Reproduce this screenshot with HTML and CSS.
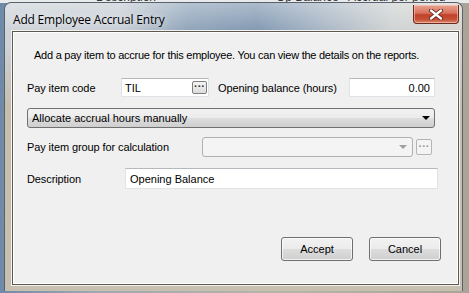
FILE: index.html
```html
<!DOCTYPE html>
<html lang="en">
<head>
    <meta charset="UTF-8">
    <title>Add Employee Accrual Entry</title>
    <link rel="stylesheet" href="styles.css">
</head>
<body>

    <!-- blurred window behind the dialog -->
    <div class="behind">
        <span class="behind-desc">Description</span>
        <span class="behind-open">Op Balance &nbsp; Accrual per period</span>
    </div>

    <div class="window">
        <div class="titlebar">
            <span class="title">Add Employee Accrual Entry</span>
            <button class="close-btn">
                <svg width="14" height="11" viewBox="0 0 14 11">
                    <path d="M2 1.5 L12 9.5 M12 1.5 L2 9.5" stroke="#5a1a10" stroke-width="4" stroke-linecap="round"/>
                    <path d="M2 1.5 L12 9.5 M12 1.5 L2 9.5" stroke="#ffffff" stroke-width="2.4" stroke-linecap="round"/>
                </svg>
            </button>
        </div>

        <div class="client">
            <p class="intro">Add a pay item to accrue for this employee. You can view the details on the reports.</p>

            <div class="row row-code">
                <label class="label label-code">Pay item code</label>
                <div class="textbox code-box">
                    <span>TIL</span>
                    <span class="dots-btn">&middot;&middot;&middot;</span>
                </div>
                <label class="label label-open">Opening balance (hours)</label>
                <div class="textbox hours-box">0.00</div>
            </div>

            <div class="dropdown">
                <span>Allocate accrual hours manually</span>
                <span class="arrow"></span>
            </div>

            <div class="row row-group">
                <label class="label label-group">Pay item group for calculation</label>
                <div class="combo-disabled">
                    <span class="arrow arrow-gray"></span>
                </div>
                <span class="dots-btn dots-disabled">&middot;&middot;&middot;</span>
            </div>

            <div class="row row-desc">
                <label class="label label-desc">Description</label>
                <div class="textbox desc-box">Opening Balance</div>
            </div>

            <div class="buttons">
                <button class="button">Accept</button>
                <button class="button">Cancel</button>
            </div>
        </div>
    </div>

</body>
</html>
```

FILE: styles.css
```css
body {
    margin: 0;
    padding: 0;
    width: 469px;
    height: 293px;
    overflow: hidden;
    font-family: 'Liberation Sans', Arial, sans-serif;
    font-size: 11px;
    color: #000;
    background: linear-gradient(90deg, #6f8aa8 0%, #9fa9b0 20%, #b8b4a8 60%, #a9a497 100%);
}

.behind {
    height: 3px;
    overflow: hidden;
    position: relative;
    font-size: 12px;
    color: #333;
    background: #e8eaec;
}

.behind span {
    position: absolute;
    top: -10px;
}

.behind-desc { left: 96px; }
.behind-open { left: 276px; }

.window {
    margin: -1px 0 0 4px;
    width: 459px;
    height: 289px;
    box-sizing: border-box;
    padding: 0 3px 0 7px;
    border-radius: 7px 7px 0 0;
    border: 1px solid #59626c;
    border-bottom: none;
    background:
        linear-gradient(180deg, rgba(255,255,255,0.35) 0px, rgba(255,255,255,0) 30px),
        linear-gradient(90deg, #cdd3d9 0%, #c6cdd4 25%, #8ea3b9 40%, #7f97b1 55%, #a8b6c4 70%, #cfd2d2 85%, #d6d3cc 100%);
    background-color: #c6bfb0;
    position: relative;
}

.window::after {
    content: "";
    position: absolute;
    left: 0;
    right: 0;
    top: 40px;
    bottom: 0;
    background: linear-gradient(180deg, rgba(198,191,176,0) 0%, #c5bead 25%, #c7c0b0 100%);
    z-index: 0;
}

.titlebar {
    height: 28px;
    display: flex;
    align-items: flex-start;
    position: relative;
    z-index: 1;
}

.title {
    font-family: 'Open Sans', 'Noto Sans', sans-serif;
    font-size: 12px;
    letter-spacing: -0.2px;
    color: #000;
    margin: 8px 0 0 1px;
    text-shadow: 0 0 6px rgba(255,255,255,0.9);
}

.close-btn {
    margin-left: auto;
    margin-top: 2px;
    margin-right: 0;
    width: 46px;
    height: 19px;
    padding: 0;
    border: 1px solid #6b2a1c;
    border-top: none;
    border-radius: 0 0 4px 4px;
    background: linear-gradient(180deg, #e8a493 0%, #d8705a 45%, #c2412a 55%, #c65036 80%, #d98a6e 100%);
    box-shadow: inset 0 0 0 1px rgba(255,220,210,0.5);
    display: flex;
    align-items: center;
    justify-content: center;
}

.client {
    position: relative;
    z-index: 1;
    height: 254px;
    box-sizing: border-box;
    border: 1px solid #5d5950;
    box-shadow: 0 0 0 1px #f4f2ee, inset 0 0 0 1px #ffffff;
    background: #f0f0f0;
    padding: 0 0 0 14px;
    display: flex;
    flex-direction: column;
}

.intro {
    margin: 16px 0 0 7px;
    line-height: 14px;
    letter-spacing: -0.25px;
}

.row {
    display: flex;
    align-items: center;
}

.label {
    letter-spacing: -0.1px;
}

.row-code {
    margin-top: 16px;
    height: 19px;
}

.label-code { width: 94px; }

.textbox {
    box-sizing: border-box;
    background: #fff;
    border: 1px solid #e0e3e8;
    border-top-color: #b5b8bd;
    display: flex;
    align-items: center;
}

.code-box {
    width: 88px;
    height: 19px;
    padding: 0 1px 0 3px;
    justify-content: space-between;
}

.dots-btn {
    width: 15px;
    height: 13px;
    box-sizing: border-box;
    border: 1px solid #7f7f7f;
    border-radius: 2px;
    background: linear-gradient(180deg, #f5f5f5, #dcdcdc);
    font-size: 11px;
    line-height: 9px;
    text-align: center;
    font-weight: bold;
    color: #333;
}

.label-open {
    margin-left: 9px;
    width: 131px;
}

.hours-box {
    width: 86px;
    height: 19px;
    justify-content: flex-end;
    padding-right: 4px;
}

.dropdown {
    margin-top: 11px;
    width: 408px;
    height: 20px;
    box-sizing: border-box;
    border: 1px solid #707070;
    border-radius: 3px;
    background: linear-gradient(180deg, #f2f2f2 0%, #ebebeb 50%, #dddddd 51%, #cfcfcf 100%);
    display: flex;
    align-items: center;
    padding: 0 4px 0 4px;
}

.arrow {
    margin-left: auto;
    width: 0;
    height: 0;
    border-left: 4px solid transparent;
    border-right: 4px solid transparent;
    border-top: 4px solid #000;
}

.row-group {
    margin-top: 9px;
    height: 20px;
}

.label-group { width: 175px; }

.combo-disabled {
    width: 211px;
    height: 20px;
    box-sizing: border-box;
    border: 1px solid #b0b0b0;
    border-radius: 3px;
    background: #f4f4f4;
    display: flex;
    align-items: center;
    padding-right: 5px;
}

.arrow-gray {
    border-top-color: #a0a0a0;
}

.dots-disabled {
    margin-left: 3px;
    width: 16px;
    height: 16px;
    line-height: 12px;
    border-color: #b5b5b5;
    background: #f4f4f4;
    color: #9a9a9a;
}

.row-desc {
    margin-top: 11px;
    height: 21px;
}

.label-desc { width: 98px; }

.desc-box {
    width: 313px;
    height: 21px;
    padding-left: 4px;
}

.buttons {
    margin-top: 48px;
    display: flex;
    justify-content: flex-end;
    gap: 16px;
    padding-right: 17px;
}

.button {
    width: 72px;
    height: 24px;
    font-family: 'Liberation Sans', Arial, sans-serif;
    font-size: 11px;
    color: #000;
    border: 1px solid #707070;
    border-radius: 3px;
    background: linear-gradient(180deg, #f2f2f2 0%, #ebebeb 50%, #dddddd 51%, #cfcfcf 100%);
    box-shadow: inset 0 0 0 1px rgba(255,255,255,0.7);
    padding: 0;
}
```
